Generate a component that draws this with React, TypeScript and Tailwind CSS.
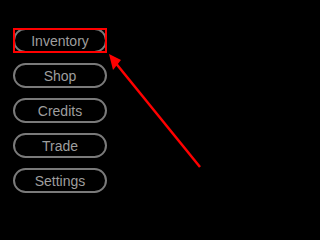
import React from 'react';

const items = ['Inventory', 'Shop', 'Credits', 'Trade', 'Settings'];

export default function App() {
    return (
        <div className="min-h-screen w-full bg-black">
            <div className="relative w-[242px] h-[234px] bg-black overflow-hidden">
                <div className="flex flex-col gap-[10px] pl-[13px] pt-[28px]">
                    {items.map((label) => (
                        <button
                            key={label}
                            className="w-[94px] h-[25px] rounded-full border-2 border-[#7a7a7a] flex items-center justify-center text-[14px] leading-none text-[#9e9e9e] font-['Liberation_Sans',sans-serif]"
                        >
                            {label}
                        </button>
                    ))}
                </div>
                {/* annotation overlay */}
                <div className="absolute left-[13px] top-[28px] w-[94px] h-[25px] border-2 border-[#ff0000]" />
                <svg className="absolute inset-0" width="242" height="234" viewBox="0 0 242 234">
                    <line x1="200" y1="167" x2="114" y2="61" stroke="#ff0000" strokeWidth="2.5" />
                    <polygon points="109,54 121,60 113,70" fill="#ff0000" />
                </svg>
            </div>
        </div>
    );
}
